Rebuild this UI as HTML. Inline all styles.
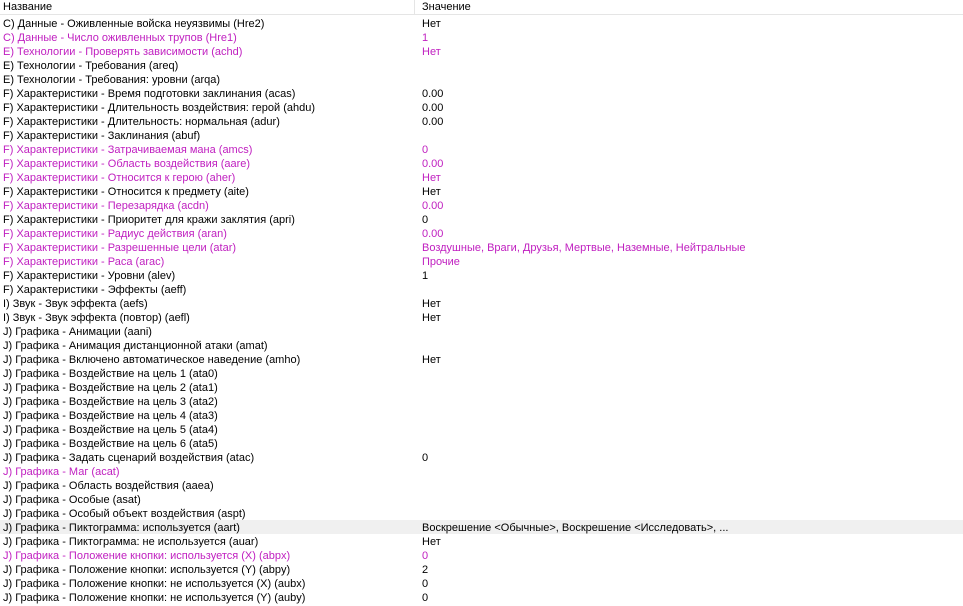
<!DOCTYPE html><html><head><meta charset="utf-8"><style>
body{margin:0;width:963px;height:599px;overflow:hidden;background:#fff;font-family:"Liberation Sans",sans-serif;font-size:11px;color:#000}
.h{position:absolute;top:0;left:0;width:963px;height:14px;background:#fff;border-bottom:1px solid #e5e5e5}
.h span{position:absolute;top:0;line-height:14px}
.sep{position:absolute;left:414px;top:0;width:1px;height:14px;background:#e5e5e5}
.r{position:absolute;left:0;width:963px;height:14px;line-height:16px;white-space:nowrap}
.r b{font-weight:normal;position:absolute;left:3px;top:0}
.r i{font-style:normal;position:absolute;left:422px;top:0}
.m{color:#c020c0}
.s{background:#f0f0f0}
</style></head><body>
<div class="h"><span style="left:3px">Название</span><div class="sep"></div><span style="left:422px">Значение</span></div>
<div id="l"></div>
<script>
var d=[
["C) Данные - Оживленные войска неуязвимы (Hre2)","Нет"],
["C) Данные - Число оживленных трупов (Hre1)","1",1],
["E) Технологии - Проверять зависимости (achd)","Нет",1],
["E) Технологии - Требования (areq)",""],
["E) Технологии - Требования: уровни (arqa)",""],
["F) Характеристики - Время подготовки заклинания (acas)","0.00"],
["F) Характеристики - Длительность воздействия: герой (ahdu)","0.00"],
["F) Характеристики - Длительность: нормальная (adur)","0.00"],
["F) Характеристики - Заклинания (abuf)",""],
["F) Характеристики - Затрачиваемая мана (amcs)","0",1],
["F) Характеристики - Область воздействия (aare)","0.00",1],
["F) Характеристики - Относится к герою (aher)","Нет",1],
["F) Характеристики - Относится к предмету (aite)","Нет"],
["F) Характеристики - Перезарядка (acdn)","0.00",1],
["F) Характеристики - Приоритет для кражи заклятия (apri)","0"],
["F) Характеристики - Радиус действия (aran)","0.00",1],
["F) Характеристики - Разрешенные цели (atar)","Воздушные, Враги, Друзья, Мертвые, Наземные, Нейтральные",1],
["F) Характеристики - Раса (arac)","Прочие",1],
["F) Характеристики - Уровни (alev)","1"],
["F) Характеристики - Эффекты (aeff)",""],
["I) Звук - Звук эффекта (aefs)","Нет"],
["I) Звук - Звук эффекта (повтор) (aefl)","Нет"],
["J) Графика - Анимации (aani)",""],
["J) Графика - Анимация дистанционной атаки (amat)",""],
["J) Графика - Включено автоматическое наведение (amho)","Нет"],
["J) Графика - Воздействие на цель 1 (ata0)",""],
["J) Графика - Воздействие на цель 2 (ata1)",""],
["J) Графика - Воздействие на цель 3 (ata2)",""],
["J) Графика - Воздействие на цель 4 (ata3)",""],
["J) Графика - Воздействие на цель 5 (ata4)",""],
["J) Графика - Воздействие на цель 6 (ata5)",""],
["J) Графика - Задать сценарий воздействия (atac)","0"],
["J) Графика - Маг (acat)","",1],
["J) Графика - Область воздействия (aaea)",""],
["J) Графика - Особые (asat)",""],
["J) Графика - Особый объект воздействия (aspt)",""],
["J) Графика - Пиктограмма: используется (aart)","Воскрешение <Обычные>, Воскрешение <Исследовать>, ...",0,1],
["J) Графика - Пиктограмма: не используется (auar)","Нет"],
["J) Графика - Положение кнопки: используется (X) (abpx)","0",1],
["J) Графика - Положение кнопки: используется (Y) (abpy)","2"],
["J) Графика - Положение кнопки: не используется (X) (aubx)","0"],
["J) Графика - Положение кнопки: не используется (Y) (auby)","0"]];
var h="";d.forEach(function(r,i){var e=function(s){return s.replace(/</g,"&lt;").replace(/>/g,"&gt;")};
h+='<div class="r'+(r[2]?' m':'')+(r[3]?' s':'')+'" style="top:'+(16+i*14)+'px"><b>'+e(r[0])+'</b><i>'+e(r[1])+'</i></div>';});
document.getElementById("l").innerHTML=h;
</script>
</body></html>
